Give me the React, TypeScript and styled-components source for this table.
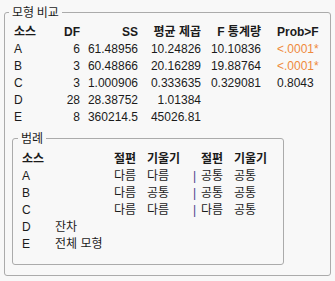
import React from "react";
import styled, { createGlobalStyle } from "styled-components";

const GlobalStyle = createGlobalStyle`
  html, body {
    margin: 0;
    padding: 0;
    background: #f8f8f8;
  }
  body {
    font-family: "Liberation Sans", "Noto Sans CJK KR", sans-serif;
    font-size: 12px;
    color: #1b1b1b;
  }
`;

const Page = styled.div`
  padding: 4px 4px 0 4px;
`;

const Group = styled.fieldset<{ $w: number; $h: number }>`
  box-sizing: border-box;
  width: ${(p) => p.$w}px;
  height: ${(p) => p.$h}px;
  margin: 0;
  padding: 0;
  border: 1px solid #ababab;
  border-radius: 3px;
  min-inline-size: 0;
`;

const Caption = styled.legend<{ $indent: number }>`
  margin-left: ${(p) => p.$indent}px;
  padding: 0 3px;
  line-height: 16px;
  font-family: "Noto Sans CJK KR", sans-serif;
  font-size: 12px;
  color: #1b1b1b;
`;

const Table = styled.div`
  display: grid;
  grid-template-columns: 36px 30px 58px 63px 60px auto;
  grid-auto-rows: 17px;
  line-height: 17px;
  margin: 4px 0 0 9px;
  white-space: nowrap;
`;

const Cell = styled.div<{ $head?: boolean; $align?: "left" | "right"; $tone?: "alert" }>`
  text-align: ${(p) => p.$align ?? "right"};
  font-weight: ${(p) => (p.$head ? 700 : 400)};
  color: ${(p) => (p.$tone === "alert" ? "#ef8a3c" : "inherit")};
`;

const ProbCell = styled(Cell)`
  padding-left: 16px;
`;

const Legend = styled.div`
  display: grid;
  grid-template-columns: 33px 59px 33px 46px 8px 33px auto;
  grid-auto-rows: 17px;
  line-height: 17px;
  margin: 5px 0 0 9px;
  white-space: nowrap;
`;

const Key = styled.div<{ $head?: boolean }>`
  font-weight: ${(p) => (p.$head ? 700 : 400)};
`;

const Bar = styled.div`
  color: #4a3f8c;
`;

const Inner = styled(Group)`
  margin: 4px 0 0 7px;
`;

type Row = {
  src: string;
  df: string;
  ss: string;
  ms: string;
  f?: string;
  p?: string;
  sig?: boolean;
};

const rows: Row[] = [
  { src: "A", df: "6", ss: "61.48956", ms: "10.24826", f: "10.10836", p: "<.0001*", sig: true },
  { src: "B", df: "3", ss: "60.48866", ms: "20.16289", f: "19.88764", p: "<.0001*", sig: true },
  { src: "C", df: "3", ss: "1.000906", ms: "0.333635", f: "0.329081", p: "0.8043" },
  { src: "D", df: "28", ss: "28.38752", ms: "1.01384" },
  { src: "E", df: "8", ss: "360214.5", ms: "45026.81" },
];

type KeyRow = { src: string; label?: string; terms?: [string, string, string, string] };

const keyRows: KeyRow[] = [
  { src: "A", terms: ["다름", "다름", "공통", "공통"] },
  { src: "B", terms: ["다름", "공통", "공통", "공통"] },
  { src: "C", terms: ["다름", "다름", "다름", "공통"] },
  { src: "D", label: "잔차" },
  { src: "E", label: "전체 모형" },
];

export default function App() {
  return (
    <>
      <GlobalStyle />
      <Page>
        <Group $w={327} $h={272}>
          <Caption $indent={4}>모형 비교</Caption>
          <Table>
            <Cell $head $align="left">소스</Cell>
            <Cell $head>DF</Cell>
            <Cell $head>SS</Cell>
            <Cell $head>평균 제곱</Cell>
            <Cell $head>F 통계량</Cell>
            <ProbCell $head $align="left">Prob&gt;F</ProbCell>
            {rows.map((r) => (
              <React.Fragment key={r.src}>
                <Cell $align="left">{r.src}</Cell>
                <Cell>{r.df}</Cell>
                <Cell>{r.ss}</Cell>
                <Cell>{r.ms}</Cell>
                <Cell>{r.f ?? ""}</Cell>
                <ProbCell $align="left" $tone={r.sig ? "alert" : undefined}>
                  {r.p ?? ""}
                </ProbCell>
              </React.Fragment>
            ))}
          </Table>
          <Inner $w={272} $h={135}>
            <Caption $indent={5}>범례</Caption>
            <Legend>
              <Key $head>소스</Key>
              <Key />
              <Key $head>절편</Key>
              <Key $head>기울기</Key>
              <Key />
              <Key $head>절편</Key>
              <Key $head>기울기</Key>
              {keyRows.map((k) => (
                <React.Fragment key={k.src}>
                  <Key>{k.src}</Key>
                  <Key>{k.label ?? ""}</Key>
                  {k.terms ? (
                    <>
                      <Key>{k.terms[0]}</Key>
                      <Key>{k.terms[1]}</Key>
                      <Bar>|</Bar>
                      <Key>{k.terms[2]}</Key>
                      <Key>{k.terms[3]}</Key>
                    </>
                  ) : (
                    <>
                      <Key />
                      <Key />
                      <Key />
                      <Key />
                      <Key />
                    </>
                  )}
                </React.Fragment>
              ))}
            </Legend>
          </Inner>
        </Group>
      </Page>
    </>
  );
}
